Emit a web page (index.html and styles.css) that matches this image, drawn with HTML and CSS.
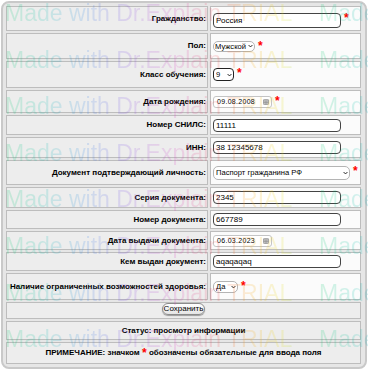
FILE: index.html
```html
<!DOCTYPE html>
<html lang="ru">
<head>
<meta charset="utf-8">
<title>Анкета</title>
<link rel="stylesheet" href="styles.css">
</head>
<body>
<div class="frame">
  <table class="form">
    <tr class="h25">
      <th>Гражданство:</th>
      <td><div class="field field-low"><input class="text text-tall" type="text" value="Россия"><span class="req">*</span></div></td>
    </tr>
    <tr class="h26">
      <th>Пол:</th>
      <td><div class="field"><span class="sel sel-sex"><select><option>Мужской</option></select><svg class="chev" viewBox="0 0 8 5"><path d="M1 1l3 3 3-3"/></svg></span><span class="req">*</span></div></td>
    </tr>
    <tr class="h27">
      <th>Класс обучения:</th>
      <td><div class="field"><span class="sel sel-grade"><select><option>9</option></select><svg class="chev" viewBox="0 0 8 5"><path d="M1 1l3 3 3-3"/></svg></span><span class="req">*</span></div></td>
    </tr>
    <tr class="h23">
      <th>Дата рождения:</th>
      <td><div class="field"><span class="date"><span class="date-text">09.08.2008</span><svg class="cal" viewBox="0 0 7 7"><rect x="0.5" y="0.5" width="6" height="6" rx="1"/><path d="M0.5 2.2h6M2.5 2.2v4.3M4.5 2.2v4.3M0.5 4.3h6"/></svg></span><span class="req">*</span></div></td>
    </tr>
    <tr class="h20">
      <th>Номер СНИЛС:</th>
      <td><div class="field"><input class="text" type="text" value="11111"></div></td>
    </tr>
    <tr class="h21">
      <th>ИНН:</th>
      <td><div class="field"><input class="text" type="text" value="38 12345678"></div></td>
    </tr>
    <tr class="h25">
      <th>Документ подтверждающий личность:</th>
      <td><div class="field"><span class="sel sel-doc"><select><option>Паспорт гражданина РФ</option></select><svg class="chev" viewBox="0 0 8 5"><path d="M1 1l3 3 3-3"/></svg></span><span class="req">*</span></div></td>
    </tr>
    <tr class="h21">
      <th>Серия документа:</th>
      <td><div class="field"><input class="text" type="text" value="2345"></div></td>
    </tr>
    <tr class="h19">
      <th>Номер документа:</th>
      <td><div class="field"><input class="text" type="text" value="667789"></div></td>
    </tr>
    <tr class="h19">
      <th>Дата выдачи документа:</th>
      <td><div class="field"><span class="date"><span class="date-text">06.03.2023</span><svg class="cal" viewBox="0 0 7 7"><rect x="0.5" y="0.5" width="6" height="6" rx="1"/><path d="M0.5 2.2h6M2.5 2.2v4.3M4.5 2.2v4.3M0.5 4.3h6"/></svg></span></div></td>
    </tr>
    <tr class="h19">
      <th>Кем выдан документ:</th>
      <td><div class="field"><input class="text" type="text" value="aqaqaqaq"></div></td>
    </tr>
    <tr class="h27">
      <th>Наличие ограниченных возможностей здоровья:</th>
      <td><div class="field"><span class="sel sel-yes"><select><option>Да</option></select><svg class="chev" viewBox="0 0 8 5"><path d="M1 1l3 3 3-3"/></svg></span><span class="req">*</span></div></td>
    </tr>
    <tr class="h17">
      <td class="wide actions" colspan="2"><button class="save" type="button">Сохранить</button></td>
    </tr>
    <tr class="h19">
      <td class="wide note" colspan="2">Статус: просмотр информации</td>
    </tr>
    <tr class="h22">
      <td class="wide note" colspan="2">ПРИМЕЧАНИЕ: значком <span class="req req-inline">*</span> обозначены обязательные для ввода поля</td>
    </tr>
  </table>
</div>
<div class="wm" aria-hidden="true">
  <div class="wm-line"><span class="wm-tile">Made with Dr.Explain TRIAL</span><span class="wm-tile">Made with Dr.Explain TRIAL</span></div>
  <div class="wm-line"><span class="wm-tile">Made with Dr.Explain TRIAL</span><span class="wm-tile">Made with Dr.Explain TRIAL</span></div>
  <div class="wm-line"><span class="wm-tile">Made with Dr.Explain TRIAL</span><span class="wm-tile">Made with Dr.Explain TRIAL</span></div>
  <div class="wm-line"><span class="wm-tile">Made with Dr.Explain TRIAL</span><span class="wm-tile">Made with Dr.Explain TRIAL</span></div>
  <div class="wm-line"><span class="wm-tile">Made with Dr.Explain TRIAL</span><span class="wm-tile">Made with Dr.Explain TRIAL</span></div>
  <div class="wm-line"><span class="wm-tile">Made with Dr.Explain TRIAL</span><span class="wm-tile">Made with Dr.Explain TRIAL</span></div>
  <div class="wm-line"><span class="wm-tile">Made with Dr.Explain TRIAL</span><span class="wm-tile">Made with Dr.Explain TRIAL</span></div>
  <div class="wm-line"><span class="wm-tile">Made with Dr.Explain TRIAL</span><span class="wm-tile">Made with Dr.Explain TRIAL</span></div>
</div>
</body>
</html>
```
FILE: styles.css
```css
* { box-sizing: border-box; }
html, body { margin: 0; padding: 0; background: #fff; }
body {
  position: relative;
  width: 368px;
  height: 371px;
  overflow: hidden;
  font-family: "Liberation Sans", Arial, sans-serif;
  color: #000;
}
.frame {
  margin: 1px;
  width: 366px;
  height: 368px;
  border: 2px solid #c9c9c9;
  border-radius: 8px;
  background: #e6e6e6;
  padding: 1px 2px 1px 1px;
}
.form {
  width: 100%;
  border-collapse: separate;
  border-spacing: 2px;
  table-layout: fixed;
}
.form th, .form td {
  border: 1px solid #bdbdbd;
  padding: 0 2px;
  vertical-align: middle;
}
.form th {
  width: 202px;
  background: #ededed;
  text-align: right;
  font-size: 8px;
  font-weight: bold;
  line-height: 10px;
  white-space: nowrap;
  padding: 0 1px;
}
.form td { background: #fbfbfb; }
.h17 { height: 17px; }
.h19 { height: 19px; }
.h20 { height: 20px; }
.h21 { height: 21px; }
.h22 { height: 22px; }
.h23 { height: 23px; }
.h25 { height: 25px; }
.h26 { height: 26px; }
.h27 { height: 27px; }

.field { display: flex; align-items: flex-start; gap: 3px; }
.field-low { margin-top: 4px; }
.req {
  color: #f00;
  font: bold 12px/10px "Liberation Sans", Arial, sans-serif;
}
.text {
  width: 128px;
  height: 13px;
  margin: 0;
  padding: 0 2px;
  border: 1px solid #444;
  border-radius: 4px;
  background: #fff;
  font: 8px "Liberation Sans", Arial, sans-serif;
  color: #000;
}
.text-tall { height: 15px; }
.sel { position: relative; display: inline-flex; }
.sel select {
  appearance: none;
  -webkit-appearance: none;
  margin: 0;
  padding: 0 6px 0 2px;
  border: 1px solid #b4b4b4;
  border-radius: 5px;
  background: #fff;
  font: 7.6px "Liberation Sans", Arial, sans-serif;
  color: #000;
  width: 100%;
  height: 100%;
}
.sel .chev {
  position: absolute;
  right: 2px;
  top: 50%;
  width: 5px;
  height: 4px;
  margin-top: -2px;
  fill: none;
  stroke: #222;
  stroke-width: 1.6;
  pointer-events: none;
}
.sel-sex { width: 42px; height: 11px; }
.sel-sex select { padding-left: 1px; }
.sel-grade { width: 21px; height: 13px; }
.sel-grade select { border: 1.5px solid #222; border-radius: 4px; }
.sel-doc { width: 137px; height: 14px; }
.sel-yes { width: 25px; height: 12px; }

.date {
  display: inline-flex;
  align-items: center;
  justify-content: space-between;
  width: 59px;
  height: 12px;
  padding: 0 2px 0 3px;
  border: 1px solid #c4c4c4;
  border-radius: 3px;
  background: #fff;
  font: 7px "Liberation Sans", Arial, sans-serif;
  letter-spacing: 0.3px;
}
.cal {
  width: 6px;
  height: 6px;
  fill: #ddd;
  stroke: #888;
  stroke-width: 0.8;
}

.wide { text-align: center; }
.form td.wide { background: #ededed; }
.form td.actions { vertical-align: top; padding-top: 0; line-height: 0; }
.save {
  display: block;
  width: 43px;
  height: 12px;
  margin: 0 auto;
  padding: 0;
  border: 1px solid #8c8c8c;
  border-radius: 6px;
  background: linear-gradient(#ffffff, #e4e4e4);
  box-shadow: 0 1px 1px rgba(0,0,0,0.35);
  font: 8px/10px "Liberation Sans", Arial, sans-serif;
  color: #000;
}
.note {
  font-size: 8px;
  font-weight: bold;
  line-height: 10px;
}
.req-inline { font-size: 12px; vertical-align: top; }

.wm {
  position: absolute;
  top: 0;
  left: 0;
  width: 368px;
  height: 371px;
  overflow: hidden;
  pointer-events: none;
  padding-top: 2px;
}
.wm-line {
  height: 46.6px;
  white-space: nowrap;
  padding-left: 5px;
  font: 23px/23px "Liberation Sans", Arial, sans-serif;
}
.wm-tile {
  display: inline-block;
  width: 314px;
  color: transparent;
  background: linear-gradient(90deg,
    rgba(0, 200, 100, 0.17) 0%,
    rgba(0, 190, 170, 0.17) 12%,
    rgba(40, 130, 230, 0.17) 25%,
    rgba(120, 70, 230, 0.17) 38%,
    rgba(220, 60, 190, 0.17) 55%,
    rgba(240, 60, 60, 0.17) 68%,
    rgba(250, 170, 30, 0.19) 78%,
    rgba(235, 225, 30, 0.19) 88%,
    rgba(0, 200, 100, 0.17) 100%);
  -webkit-background-clip: text;
  background-clip: text;
}
```
